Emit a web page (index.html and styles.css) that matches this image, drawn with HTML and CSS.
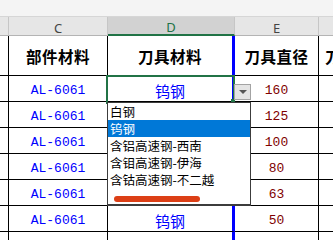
FILE: index.html
```html
<!DOCTYPE html>
<html lang="zh-CN">
<head>
  <meta charset="UTF-8">
  <title>刀具材料</title>
  <link rel="stylesheet" href="styles.css">
</head>
<body>

<div class="topbar"></div>

<div class="sheet">
  <div class="row colheads">
    <div class="cell cb"></div>
    <div class="cell cc">C</div>
    <div class="cell cd active">D</div>
    <div class="cell ce">E</div>
    <div class="cell cf">F</div>
  </div>

  <div class="row head">
    <div class="cell cb"></div>
    <div class="cell cc">部件材料</div>
    <div class="cell cd">刀具材料</div>
    <div class="cell ce">刀具直径</div>
    <div class="cell cf">刀具</div>
  </div>

  <div class="row data">
    <div class="cell cb"></div>
    <div class="cell cc part">AL-6061</div>
    <div class="cell cd tool">钨钢</div>
    <div class="cell ce num">160</div>
    <div class="cell cf"></div>
  </div>
  <!-- rows 3-6: column D sits under the open list -->
  <div class="row data">
    <div class="cell cb"></div>
    <div class="cell cc part">AL-6061</div>
    <div class="cell cd tool"></div>
    <div class="cell ce num">125</div>
    <div class="cell cf"></div>
  </div>
  <div class="row data">
    <div class="cell cb"></div>
    <div class="cell cc part">AL-6061</div>
    <div class="cell cd tool"></div>
    <div class="cell ce num">100</div>
    <div class="cell cf"></div>
  </div>
  <div class="row data">
    <div class="cell cb"></div>
    <div class="cell cc part">AL-6061</div>
    <div class="cell cd tool"></div>
    <div class="cell ce num">80</div>
    <div class="cell cf"></div>
  </div>
  <div class="row data">
    <div class="cell cb"></div>
    <div class="cell cc part">AL-6061</div>
    <div class="cell cd tool"></div>
    <div class="cell ce num">63</div>
    <div class="cell cf"></div>
  </div>
  <div class="row data">
    <div class="cell cb"></div>
    <div class="cell cc part">AL-6061</div>
    <div class="cell cd tool">钨钢</div>
    <div class="cell ce num">50</div>
    <div class="cell cf"></div>
  </div>
  <div class="row data">
    <div class="cell cb"></div>
    <div class="cell cc part"></div>
    <div class="cell cd tool"></div>
    <div class="cell ce num"></div>
    <div class="cell cf"></div>
  </div>
</div>

<!-- selected cell, its dropdown and the marker stroke -->
<div class="selection"></div>
<div class="fill-handle"></div>
<div class="drop-btn"><span class="caret"></span></div>

<div class="drop-list">
  <div class="item">白钢</div>
  <div class="item picked">钨钢</div>
  <div class="item">含铝高速钢-西南</div>
  <div class="item">含钼高速钢-伊海</div>
  <div class="item">含钴高速钢-不二越</div>
</div>

<div class="marker"></div>

</body>
</html>
```

FILE: styles.css
```css
* {
  box-sizing: border-box;
  margin: 0;
  padding: 0;
}

body {
  position: relative;
  width: 333px;
  height: 240px;
  overflow: hidden;
  background: #fff;
  font-family: "Noto Sans CJK SC", sans-serif;
  color: #000;
}

.topbar {
  height: 17px;
  background: #f4f4f4;
  border-bottom: 1px solid #d6d6d6;
}

.sheet {
  width: 333px;
  height: 223px;
  overflow: hidden;
}

.row {
  display: flex;
  width: 400px;
}

.cell {
  flex: none;
  display: flex;
  align-items: center;
  justify-content: center;
  white-space: nowrap;
  overflow: hidden;
  border-right: 1px solid #000;
  border-bottom: 1px solid #000;
}

.cb { width: 9px; }
.cc { width: 99px; }
.cd { width: 127px; border-right: 3px solid #0000ff; }
.ce { width: 84px; }
.cf { width: 77px; justify-content: flex-start; padding-left: 6px; }

/* column letters */
.colheads .cell {
  height: 19px;
  padding-top: 3px;
  background: #e6e6e6;
  border-right: 1px solid #c6c6c6;
  border-bottom: 1px solid #b4b4b4;
  font-family: "Noto Sans", sans-serif;
  font-size: 13px;
  color: #444;
}

.colheads .cf {
  justify-content: center;
  padding-left: 0;
}

.colheads .cell.active {
  background: #d2d2d2;
  border-bottom: 2px solid #217346;
  color: #217346;
}

/* header row */
.head .cell {
  height: 40px;
  font-size: 15.5px;
  font-weight: 700;
  letter-spacing: 0.5px;
}

/* data rows */
.data .cell {
  height: 26px;
  padding-top: 3px;
}

.part {
  font-family: "Liberation Mono", monospace;
  font-size: 13px;
  color: #0000ff;
}

.tool {
  font-size: 15px;
  color: #0000ff;
}

.num {
  font-family: "Liberation Mono", monospace;
  font-size: 13px;
  color: #800000;
}

.selection {
  position: absolute;
  left: 106px;
  top: 75px;
  width: 129px;
  height: 29px;
  border: 2px solid #217346;
}

.fill-handle {
  position: absolute;
  left: 231px;
  top: 99px;
  width: 4px;
  height: 4px;
  background: #217346;
}

.drop-btn {
  position: absolute;
  left: 234px;
  top: 84px;
  width: 17px;
  height: 16px;
  background: #e4e4e4;
  border: 1px solid #a3a3a3;
  display: flex;
  align-items: center;
  justify-content: center;
}

.caret {
  width: 0;
  height: 0;
  border-left: 4px solid transparent;
  border-right: 4px solid transparent;
  border-top: 4px solid #555;
}

.drop-list {
  position: absolute;
  left: 107px;
  top: 102px;
  width: 144px;
  height: 104px;
  background: #fff;
  border: 1px solid #3c3c3c;
  border-bottom-width: 2px;
}

.item {
  height: 17px;
  line-height: 17px;
  padding-left: 2px;
  font-size: 12.5px;
  white-space: nowrap;
}

.item.picked {
  background: #0078d7;
  color: #fff;
}

.marker {
  position: absolute;
  left: 114px;
  top: 196px;
  width: 86px;
  height: 6px;
  border-radius: 3px;
  background: #dc3f16;
}
```
